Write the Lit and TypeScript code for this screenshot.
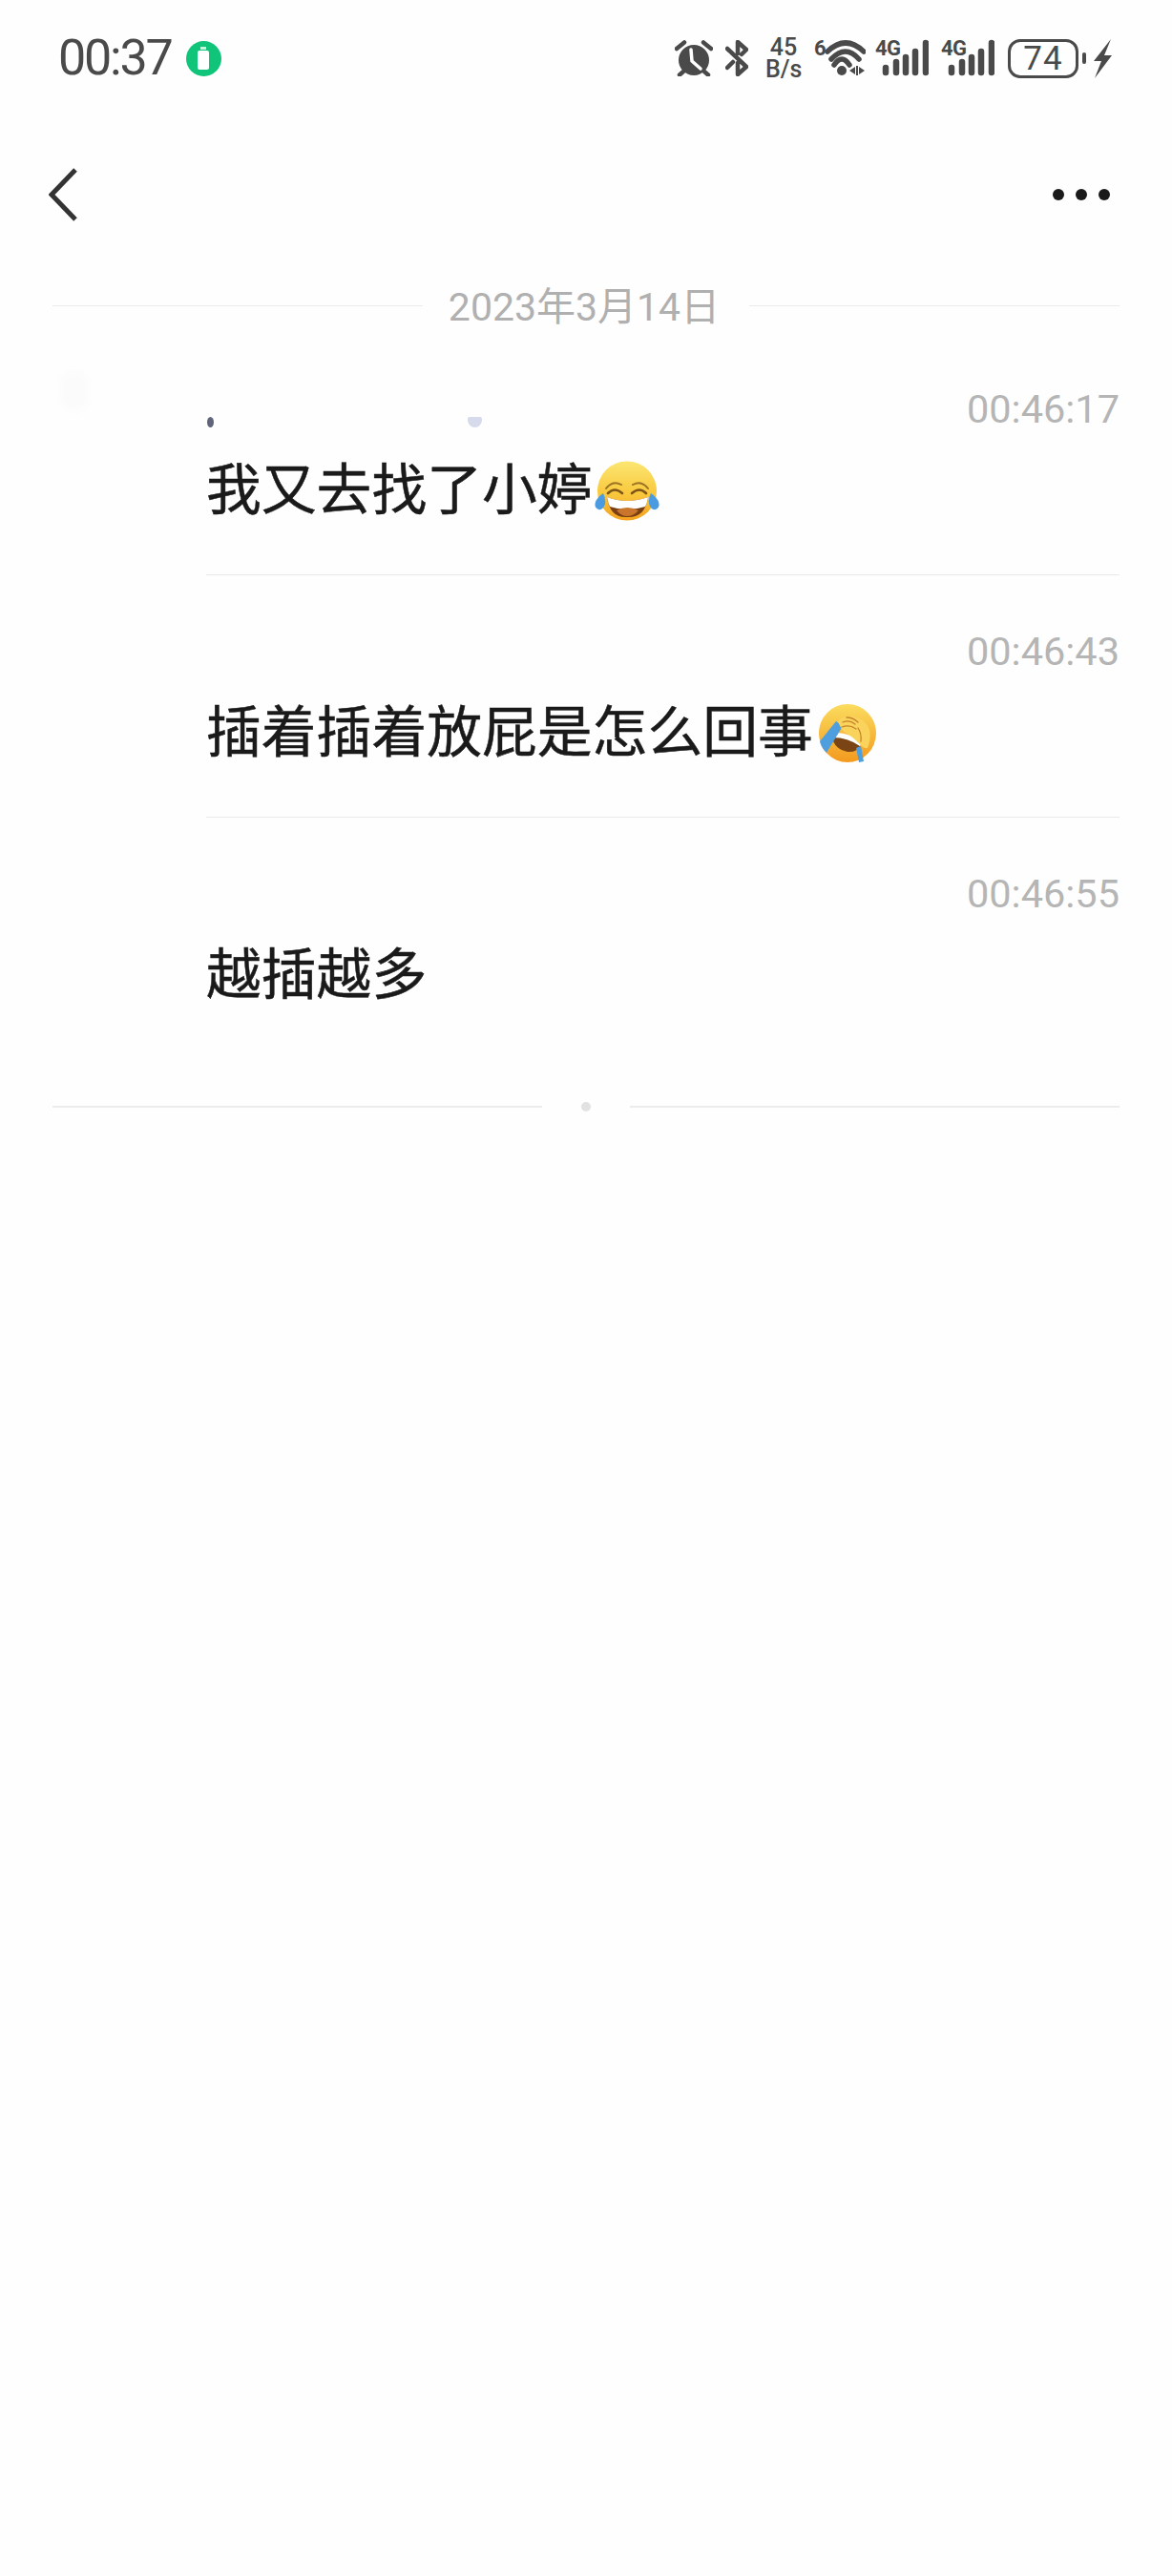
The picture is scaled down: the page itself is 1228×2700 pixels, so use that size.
import { LitElement, html, css, svg, nothing } from 'lit';
import { customElement } from 'lit/decorators.js';

type Emoji = 'joy' | 'facepalm';

interface Message {
  time: string;
  text: string;
  emoji?: Emoji;
  sender?: boolean;
}

const messages: Message[] = [
  { time: '00:46:17', text: '我又去找了小婷', emoji: 'joy', sender: true },
  { time: '00:46:43', text: '插着插着放屁是怎么回事', emoji: 'facepalm' },
  { time: '00:46:55', text: '越插越多' },
];

const ICON = '#4a4a4a';

const signal = svg`
  <svg class="signal" width="56" height="50" viewBox="0 -6 56 50">
    <text x="0" y="16" class="tiny">4G</text>
    <g stroke="${ICON}" stroke-width="6.5" stroke-linecap="round">
      <path d="M11 29V34M22 23V34M32 18V34M42 12V34M53 3V34" />
    </g>
  </svg>
`;

const joyEmoji = svg`
  <svg class="emoji joy" width="68" height="63" viewBox="12 8 68 63">
    <defs>
      <linearGradient id="joyFace" x1="0" y1="0" x2="0" y2="1">
        <stop offset="0" stop-color="#fbe672" />
        <stop offset="0.55" stop-color="#f9c83c" />
        <stop offset="1" stop-color="#f4a21f" />
      </linearGradient>
    </defs>
    <circle cx="46" cy="39.5" r="31" fill="url(#joyFace)" />
    <path d="M25 46Q46 54 68 46Q65 68 46 67Q28 68 25 46Z" fill="#7a3f12" />
    <path d="M25 46Q46 54 68 46Q67 53 65 56Q46 62 28 56Q26 52 25 46Z" fill="#fff" />
    <path d="M35 60Q46 54 58 60Q53 66 46 66Q40 66 35 60Z" fill="#c9752b" />
    <g fill="none" stroke="#7d5518" stroke-linecap="round">
      <path d="M24 37Q31 28 40 33" stroke-width="2" opacity="0.75" />
      <path d="M52 33Q61 28 68 37" stroke-width="2" opacity="0.75" />
      <path d="M26 42Q33 35 41 42" stroke-width="2.6" />
      <path d="M51 42Q59 35 66 42" stroke-width="2.6" />
    </g>
    <path d="M21 42Q24 48 23 53Q21 60 16 59Q11 57 13 51Q15 46 21 42Z" fill="#4a9be0" />
    <path d="M71 42Q68 48 69 53Q71 60 76 59Q81 57 79 51Q77 46 71 42Z" fill="#4a9be0" />
  </svg>
`;

const palmEmoji = svg`
  <svg class="emoji palm" width="62" height="63" viewBox="11 8 62 63">
    <defs>
      <linearGradient id="palmFace" x1="0" y1="0" x2="0" y2="1">
        <stop offset="0" stop-color="#fbdc5e" />
        <stop offset="1" stop-color="#f39a1e" />
      </linearGradient>
    </defs>
    <ellipse cx="42" cy="39.5" rx="30" ry="30.5" fill="url(#palmFace)" />
    <path d="M26 44Q42 40 56 52Q52 60 42 59Q28 56 26 44Z" fill="#7a4414" />
    <path d="M28 39Q44 38 58 50L55 53Q42 44 27 44Z" fill="#fff" />
    <path d="M30 27L37 32L20 60Q14 54 13 48Z" fill="#4f9fdf" />
    <path d="M51 55L56 53L59 69L54 70Z" fill="#4f9fdf" />
    <path d="M32 27Q36 22 42 22Q48 20 54 24Q62 27 65 36Q67 46 63 55Q58 56 54 50Q46 42 38 38Q34 33 32 27Z" fill="#fad35c" />
    <g fill="none" stroke="#c5842a" stroke-width="1.3" stroke-linecap="round">
      <path d="M37 28Q44 25 50 30" />
      <path d="M36 33Q44 30 51 35" />
      <path d="M41 23Q48 23 53 28" />
      <path d="M53 34Q57 40 56 48" />
    </g>
  </svg>
`;

@customElement('app-root')
export class AppRoot extends LitElement {
  static styles = css`
    :host {
      display: block;
      min-height: 2700px;
      background: #fefefe;
      font-family: Roboto, 'Noto Sans CJK SC', sans-serif;
    }

    /* status bar */
    .status {
      display: flex;
      justify-content: space-between;
      align-items: center;
      height: 122px;
      padding: 0 63px 0 61px;
      color: #4a4a4a;
    }
    .status-left,
    .status-right {
      display: flex;
      align-items: center;
    }
    .status-left {
      gap: 15px;
    }
    .status-right {
      gap: 13px;
    }
    .clock {
      font-size: 52px;
      line-height: 60px;
      letter-spacing: -2.2px;
    }
    .charge {
      width: 37px;
      height: 37px;
      border-radius: 50%;
      background: #10c57a;
      display: flex;
      align-items: center;
      justify-content: center;
    }
    .speed {
      width: 38px;
      margin-left: 5px;
      text-align: center;
      font-size: 25px;
      font-weight: 500;
      line-height: 23px;
    }
    .wifi {
      margin-right: -3px;
    }
    .tiny {
      font: 700 22px Roboto, sans-serif;
      fill: #4a4a4a;
      letter-spacing: -0.5px;
    }
    .battery {
      display: flex;
      align-items: center;
      margin-left: 1px;
    }
    .battery-body {
      box-sizing: border-box;
      width: 74px;
      height: 41px;
      border: 3px solid #4a4a4a;
      border-radius: 13px;
      text-align: center;
      font-size: 35px;
      line-height: 35px;
      letter-spacing: 1px;
    }
    .battery-nub {
      width: 4px;
      height: 12px;
      margin-left: 4px;
      border-radius: 2px;
      background: #4a4a4a;
    }
    .bolt {
      margin-left: -5px;
    }

    /* nav */
    .nav {
      display: flex;
      justify-content: space-between;
      align-items: center;
      height: 164px;
      padding: 0 65px 0 51px;
    }
    .more {
      display: flex;
      gap: 12px;
    }
    .more span {
      width: 12px;
      height: 12px;
      border-radius: 50%;
      background: #1a1a1a;
    }

    /* date divider */
    .date-row {
      display: flex;
      align-items: center;
      height: 54px;
      margin-top: 9px;
      padding: 0 55px;
    }
    .rule {
      flex: 1;
      height: 1.5px;
      background: #ebebeb;
    }
    .date-row .rule {
      margin-bottom: 3px;
    }
    .date {
      margin: 0 31px 0 27px;
      font-size: 41px;
      line-height: 54px;
      color: #b0b0b0;
    }

    /* messages */
    .list {
      position: relative;
      padding: 0 55px 0 216px;
    }
    .ghost {
      position: absolute;
      left: 64px;
      top: 41px;
      width: 28px;
      height: 40px;
      border-radius: 10px;
      background: #fbfbfc;
      filter: blur(3px);
    }
    .row {
      padding-top: 57px;
      height: 196px;
      border-bottom: 1.5px solid #e9e9e9;
    }
    .row:last-child {
      border-bottom: none;
    }
    .head {
      display: flex;
      justify-content: space-between;
      height: 46px;
    }
    .sender {
      display: flex;
      align-items: flex-end;
      padding-bottom: 4px;
    }
    .speck {
      filter: blur(0.6px);
    }
    .speck.a {
      width: 7px;
      height: 11px;
      margin-left: 1px;
      border-radius: 50%;
      background: #60657a;
    }
    .speck.b {
      width: 15px;
      height: 11px;
      margin-left: 266px;
      border-radius: 2px 2px 8px 8px;
      background: #d6daea;
    }
    .time {
      font-size: 41.5px;
      line-height: 46px;
      color: #b5b5b5;
    }
    .body {
      display: flex;
      align-items: center;
      height: 80px;
      margin-top: 22px;
      font-size: 57.8px;
      line-height: 80px;
      color: #1a1a1a;
      -webkit-text-stroke: 0.5px #1a1a1a;
    }
    .joy {
      margin-left: 2px;
    }
    .palm {
      margin-left: 5px;
    }

    /* end marker */
    .end {
      display: flex;
      align-items: center;
      height: 100px;
      padding: 0 55px;
    }
    .end .rule {
      background: #ececec;
    }
    .end-dot {
      width: 10px;
      height: 10px;
      margin: 0 41px;
      border-radius: 50%;
      background: #e2e2e2;
    }
  `;

  private renderStatus() {
    return html`
      <div class="status">
        <div class="status-left">
          <span class="clock">00:37</span>
          <span class="charge">
            <svg width="14" height="24" viewBox="0 0 14 24">
              <rect x="4" y="0" width="6" height="3" fill="#c8f3de" />
              <rect x="1" y="4" width="12" height="20" rx="2" fill="#fff" />
            </svg>
          </span>
        </div>
        <div class="status-right">
          <svg width="40" height="38" viewBox="0 0 40 38">
            <circle cx="20" cy="21" r="16" fill="${ICON}" />
            <path d="M17 10L18 22L27 30" fill="none" stroke="#fff" stroke-width="3.5" stroke-linecap="round" stroke-linejoin="round" />
            <path d="M2 9L10 2.5M38 9L30 2.5M9 33L5 36.5M31 33L35 36.5" fill="none" stroke="${ICON}" stroke-width="4.5" stroke-linecap="round" />
          </svg>
          <svg width="24" height="38" viewBox="0 0 24 38">
            <path d="M2 9L22 28L13 36V24M13 14V2L22 10L17 15M2 29L8 23" fill="none" stroke="${ICON}" stroke-width="4.5" stroke-linecap="round" stroke-linejoin="round" />
          </svg>
          <div class="speed">45<br />B/s</div>
          <svg class="wifi" width="54" height="52" viewBox="0 -6 54 52">
            <text x="0" y="17" class="tiny">6</text>
            <g fill="none" stroke="${ICON}" stroke-width="5.5" stroke-linecap="round">
              <path d="M14 13Q33 -5 52 13" />
              <path d="M18 21Q33 5 47 21" />
              <path d="M21 27Q29 15 37 27" />
            </g>
            <circle cx="29" cy="33" r="5" fill="${ICON}" />
            <path d="M37 33L43 29V37ZM44 28H46V38H44ZM47 29L53 33L47 37Z" fill="${ICON}" />
          </svg>
          ${signal} ${signal}
          <div class="battery">
            <div class="battery-body">74</div>
            <div class="battery-nub"></div>
          </div>
          <svg class="bolt" width="19" height="41" viewBox="0 0 19 41">
            <path d="M18 0L0 23H8L1 41L19 17H11Z" fill="${ICON}" />
          </svg>
        </div>
      </div>
    `;
  }

  private renderMessage(m: Message) {
    return html`
      <div class="row">
        <div class="head">
          <div class="sender">
            ${m.sender
              ? html`<span class="speck a"></span><span class="speck b"></span>`
              : nothing}
          </div>
          <span class="time">${m.time}</span>
        </div>
        <div class="body">
          <span>${m.text}</span>
          ${m.emoji === 'joy' ? joyEmoji : nothing}
          ${m.emoji === 'facepalm' ? palmEmoji : nothing}
        </div>
      </div>
    `;
  }

  render() {
    return html`
      ${this.renderStatus()}
      <div class="nav">
        <svg width="30" height="56" viewBox="0 0 30 56">
          <path d="M28 2L3 28L28 54" fill="none" stroke="#333" stroke-width="5" />
        </svg>
        <div class="more"><span></span><span></span><span></span></div>
      </div>
      <div class="date-row">
        <div class="rule"></div>
        <span class="date">2023年3月14日</span>
        <div class="rule"></div>
      </div>
      <div class="list">
        <div class="ghost"></div>
        ${messages.map((m) => this.renderMessage(m))}
      </div>
      <div class="end">
        <div class="rule"></div>
        <div class="end-dot"></div>
        <div class="rule"></div>
      </div>
    `;
  }
}
